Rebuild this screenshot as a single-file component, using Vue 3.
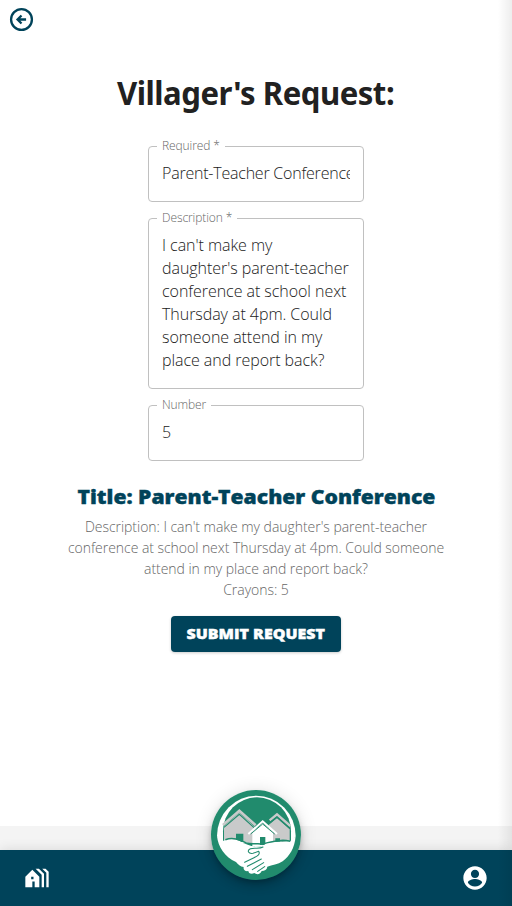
<script setup>
import { reactive } from 'vue'

const request = reactive({
  title: 'Parent-Teacher Conference',
  lines: [
    "I can't make my",
    "daughter's parent-teacher",
    'conference at school next',
    'Thursday at 4pm. Could',
    'someone attend in my',
    'place and report back?'
  ],
  crayons: 5
})
</script>

<template>
  <div class="screen">
    <header class="top">
      <svg class="back" viewBox="0 0 24 24">
        <circle cx="12" cy="12" r="10" />
        <path d="M16.400 12H9.200M12 8.200 8.200 12l3.800 3.800" />
      </svg>
    </header>
    <main class="content">
      <h1>Villager's Request:</h1>
      <form class="form" @submit.prevent>
        <fieldset class="field">
          <legend>Required *</legend>
          <div class="value clip">{{ request.title }}</div>
        </fieldset>
        <fieldset class="field area">
          <legend>Description *</legend>
          <div class="value">
            <span v-for="(line, i) in request.lines" :key="i" class="line">{{ line }}</span>
          </div>
        </fieldset>
        <fieldset class="field">
          <legend>Number</legend>
          <div class="value">{{ request.crayons }}</div>
        </fieldset>
      </form>
      <h2>Title: {{ request.title }}</h2>
      <p class="summary">
        <span>Description: I can't make my daughter's parent-teacher</span>
        <span>conference at school next Thursday at 4pm. Could someone</span>
        <span>attend in my place and report back?</span>
        <span>Crayons: {{ request.crayons }}</span>
      </p>
      <button class="submit" type="button"><span>SUBMIT REQUEST</span></button>
    </main>
    <footer class="footer">
      <nav class="nav">
        <svg class="icon" viewBox="0 0 24 24">
          <path d="M18 20V8.350L13.650 4h-2.830L16 9.180V20h2zm4 0V6.690L19.310 4h-2.830L20 7.520V20h2zM8 20v-5h2v5h4v-9L8 5l-6 6v9h6v-5zm1-7H7v-2h2v2z" fill-rule="evenodd" />
        </svg>
        <svg class="icon" viewBox="0 0 24 24">
          <path d="M12 2C6.480 2 2 6.480 2 12s4.480 10 10 10 10-4.480 10-10S17.520 2 12 2zm0 3c1.930 0 3.500 1.570 3.500 3.500S13.930 12 12 12s-3.500-1.570-3.500-3.500S10.070 5 12 5zm0 14.200c-2.600 0-4.900-1.250-6.100-3.200.03-2 4.100-3.080 6.100-3.080s6.070 1.080 6.100 3.080c-1.200 1.950-3.500 3.200-6.100 3.200z" />
        </svg>
      </nav>
      <div class="badge">
        <svg viewBox="0 0 270 270">
          <circle cx="135" cy="135" r="135" fill="#218b6d" />
          <path d="M18 138A118 121 0 0 1 254 138L240 160H32z" fill="#fff" />
          <path d="M36 155V124A102 102 0 0 1 240 124V155z" fill="#218b6d" />
          <path d="M39 109 85 68l49 45v50l-24-5-24-8H39z" fill="#c9caca" />
          <path d="M36 105 85 62l49 44" fill="none" stroke="#c9caca" stroke-width="8" />
          <path d="M39 112 85 73l44 40" fill="none" stroke="#218b6d" stroke-width="3.500" />
          <path d="m173 105 25-21 38 34v36h-58z" fill="#c9caca" />
          <path d="m176 91 22-18 40 35" fill="none" stroke="#c9caca" stroke-width="7" />
          <path d="m179 96 19-14 39 34" fill="none" stroke="#218b6d" stroke-width="3.500" />
          <path d="m124 126 31-26 31 26v42h-62z" fill="#fff" />
          <path d="m112 132 43-38 43 38" fill="none" stroke="#fff" stroke-width="6" />
          <path d="m119 132 36-30 36 30" fill="none" stroke="#218b6d" stroke-width="3" />
          <path d="M75 131h22v24H75zM147 141h16v24h-16zM193 145h14v12h-14z" fill="#218b6d" />
          <path d="M18 138 36 153C55 143 78 147 94 158L121 168 150 169C170 158 193 154 215 156L240 152 254 138C251 176 235 198 215 214 201 223 183 226 169 230 168 239 161 243 152 243 149 253 137 255 130 249 121 254 112 250 112 243 103 245 96 239 98 231 88 231 81 223 75 216 42 202 21 171 18 138z" fill="#fff" />
          <path d="M43 149C70 140 90 152 106 159 123 165 144 158 155 163 171 156 188 155 204 152 218 149 230 152 238 154" fill="none" stroke="#218b6d" stroke-width="4.500" />
          <path d="M156 171C145 178 130 172 118 176 107 182 112 192 126 190L143 184C149 193 138 199 129 203L101 217M151 207 109 229M158 218 124 239M161 230 140 244" fill="none" stroke="#218b6d" stroke-width="3.200" stroke-linecap="round" stroke-linejoin="round" />
        </svg>
      </div>
    </footer>
    <div class="edge"></div>
  </div>
</template>

<style>
body { background: #fff; }
</style>

<style scoped>
* { box-sizing: border-box; }
.screen { position: relative; display: flex; flex-direction: column; width: 512px; height: 906px; overflow: hidden; background: #fff; font-family: "Open Sans", "Noto Sans", sans-serif; font-weight: 300; color: #212121; }
.top { height: 40px; padding: 7px 9px; }
.back { display: block; width: 25px; height: 25px; fill: none; stroke: #00435a; stroke-width: 2.200; }
.content { flex: 1; display: flex; flex-direction: column; align-items: center; padding-top: 31px; }
h1, h2, p { margin: 0; white-space: nowrap; }
h1 { font-family: "Noto Sans", sans-serif; font-size: 32px; line-height: 43px; font-weight: 700; letter-spacing: -.5px; transform: scaleX(.972); }
.form { display: flex; flex-direction: column; width: 216px; margin-top: 25px; gap: 9px; }
.field { min-width: 0; margin: 0; width: 216px; height: 63px; padding: 0 13px 0 8px; border: 1px solid #c0c0c0; border-radius: 4px; }
.field.area { height: 178px; }
legend { height: 14px; padding: 0 5px; font-size: 12px; line-height: 14px; letter-spacing: -.09px; color: #666; white-space: nowrap; }
.value { padding: 9px 0 0 5px; font-size: 16px; line-height: 23px; letter-spacing: -.05px; white-space: nowrap; }
.clip { overflow: hidden; letter-spacing: -.22px; }
.line { display: block; }
h2 { margin-top: 23px; font-family: "Open Sans", sans-serif; font-size: 20px; line-height: 26px; font-weight: 800; color: #00435a; transform: scaleX(1.056); -webkit-text-stroke: .4px #00435a; }
.summary { margin-top: 6px; display: flex; flex-direction: column; align-items: center; font-size: 14px; line-height: 21px; letter-spacing: -.04px; color: #666; }
.submit { width: 170px; height: 36px; margin-top: 16px; padding: 0; border: 0; border-radius: 4px; background: #00435a; color: #fff; font: 800 14px/36px "Open Sans", sans-serif; white-space: nowrap; box-shadow: 0 1px 3px rgba(0,0,0,.2); }
.submit span { display: inline-block; transform: scaleX(1.14); -webkit-text-stroke: .4px #fff; }
.footer { position: relative; height: 80px; padding-top: 24px; background: #f4f4f4; }
.nav { display: flex; justify-content: space-between; align-items: center; height: 56px; padding: 0 23.400px; background: #00435a; box-shadow: 0 0 12px rgba(0,0,0,.12); }
.icon { width: 28px; height: 28px; fill: #fff; }
.badge { position: absolute; left: 211px; top: -36px; width: 90px; height: 90px; border-radius: 50%; box-shadow: 0 3px 5px -1px rgba(0,0,0,.2), 0 6px 10px rgba(0,0,0,.14), 0 1px 18px rgba(0,0,0,.12); }
.badge svg { display: block; width: 90px; height: 90px; }
.edge { position: absolute; top: 0; right: 0; width: 14px; height: 906px; background: linear-gradient(90deg, transparent, rgba(0,0,0,.07)); }
</style>
